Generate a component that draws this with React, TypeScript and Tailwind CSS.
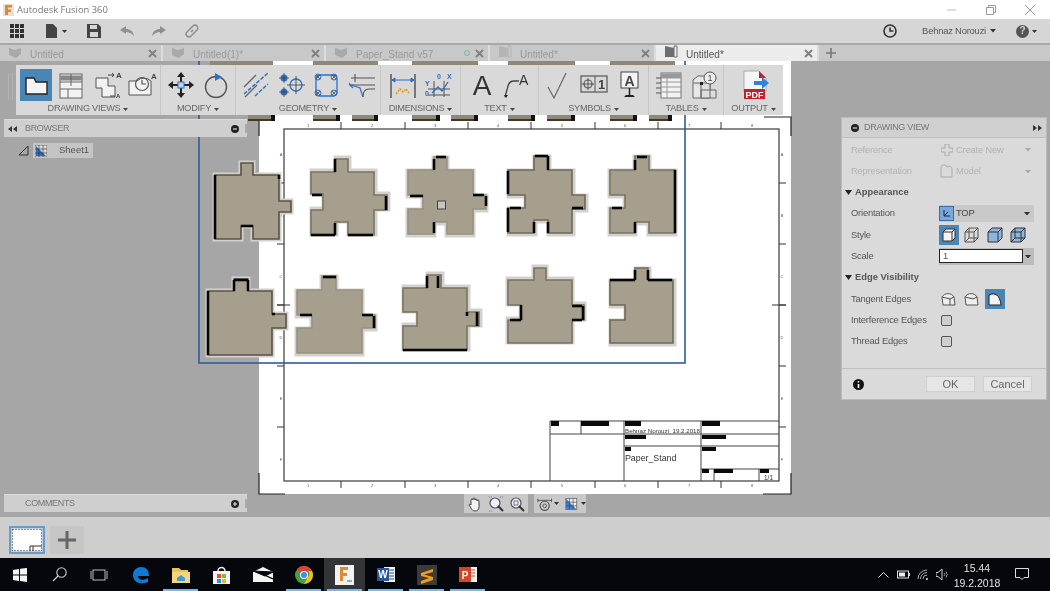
import React from "react";

const Caret = ({ c = "#444", w = 6 }: { c?: string; w?: number }) => (
  <svg width={w} height={w * 0.6} viewBox="0 0 10 6" className="inline-block shrink-0"><path d="M0 0h10L5 6z" fill={c} /></svg>
);

type P = {
  a: [number, number, number, number];
  t: [number, number, number];
  r?: [number, number, number];
  l?: [number, number, number];
  n?: [number, number, number];
  e: string;
  o: [number, number];
  k: string[];
};

const pieces: P[] = [
  { a: [215, 175, 279, 239], t: [241, 253, 163], r: [201, 212, 291], n: [241, 253, 226], e: "#5a5343", o: [0, 0], k: ["M215 175V239", "M241 226H253", "M279 175V179"] },
  { a: [311, 172, 374, 235], t: [335, 348, 159], r: [195, 210, 387], l: [194, 210, 323], n: [335, 348, 222], e: "#7a7362", o: [1, -1], k: ["M311 235H335", "M348 235H373", "M335 159V172", "M386 196V210", "M312 195H322", "M335 223V235"] },
  { a: [408, 170, 473, 234], t: [434, 447, 157], r: [195, 209, 486], l: [195, 209, 423], n: [434, 447, 222], e: "#979181", o: [0, 1], k: ["M436 157H446", "M434 159V170", "M410 196H423", "M473 195H484", "M486 196V206", "M434 222V233"] },
  { a: [508, 170, 572, 233], t: [534, 548, 156], r: [195, 209, 585], l: [195, 208, 525], n: [534, 548, 220], e: "#6f6857", o: [1, 1], k: ["M508 171V194", "M508 208V232", "M535 156H548", "M548 156V170", "M510 208H521", "M534 222V233", "M548 222V233", "M572 208H583"] },
  { a: [610, 170, 675, 233], t: [635, 649, 156], l: [195, 208, 625], n: [635, 649, 222], e: "#7a7362", o: [0, 1], k: ["M675 170V233", "M637 157H647", "M635 160V170", "M612 208H622", "M635 222V233"] },
  { a: [208, 291, 272, 355], t: [234, 248, 279], r: [314, 328, 286], e: "#5a5343", o: [0, 0], k: ["M208 291V355", "M234 280H248", "M234 280V291", "M248 280V291", "M272 314H275"] },
  { a: [297, 290, 362, 353], t: [322, 336, 276], r: [315, 328, 375], l: [315, 328, 312], e: "#979181", o: [0, 1], k: ["M323 277H336", "M300 315H312", "M362 315H373", "M374 316V328"] },
  { a: [403, 288, 467, 350], t: [427, 441, 275], r: [312, 326, 479], l: [312, 326, 417], e: "#7a7362", o: [1, -1], k: ["M403 350H467", "M438 276V288", "M467 312V316", "M477 312V326", "M427 276V288"] },
  { a: [508, 280, 572, 343], t: [534, 546, 268], r: [305, 320, 584], l: [305, 320, 521], e: "#7a7362", o: [0, -1], k: ["M510 320H521", "M521 305V320", "M572 306H582", "M572 320H582", "M583 306V320"] },
  { a: [610, 280, 673, 343], t: [635, 648, 268], l: [305, 320, 625], e: "#6f6857", o: [1, 1], k: ["M610 280H635", "M648 280H672", "M635 270V280", "M648 270V280"] },
];

const piecePath = (p: P) => {
  const [x1, y1, x2, y2] = p.a;
  let d = `M${x1} ${y1}H${p.t[0]}V${p.t[2]}H${p.t[1]}V${y1}H${x2}`;
  if (p.r) d += `V${p.r[0]}H${p.r[2]}V${p.r[1]}H${x2}`;
  d += `V${y2}`;
  if (p.n) d += `H${p.n[1]}V${p.n[2]}H${p.n[0]}V${y2}`;
  d += `H${x1}`;
  if (p.l) d += `V${p.l[1]}H${p.l[2]}V${p.l[0]}H${x1}`;
  return d + "Z";
};

const Sheet = () => {
  const topX = [341, 405, 468, 531, 595, 658, 721];
  const nums = [308, 372, 435, 498, 562, 625, 689, 752];
  const sideY = [183, 244, 305, 366, 427];
  const letters = ["A", "B", "C", "D", "E", "F"];
  const bars: [number, number, number, number][] = [
    [551, 421, 8, 5], [581, 421, 28, 5], [625, 421, 16, 5], [702, 421, 18, 5],
    [625, 435, 21, 4], [702, 435, 24, 4], [625, 447, 6, 4], [702, 447, 14, 4],
    [702, 469, 7, 4], [714, 469, 19, 4], [760, 469, 9, 4],
  ];
  const strip = [[210, 273], [313, 378], [412, 478], [508, 575], [610, 675]];
  const lowerBits = [[248, 275], [313, 340], [352, 378], [412, 440], [451, 478], [508, 535], [547, 575], [610, 637], [649, 672]];
  return (
    <svg className="absolute inset-0" width="1050" height="456" viewBox="0 61 1050 456">
      <rect x="259" y="61" width="532" height="433" fill="#fff" />
      <path d="M259 473V494H285M791 473V494H763M764 117H791V136M259 117V136" fill="none" stroke="#222" strokeWidth="1.2" />
      <rect x="284" y="129" width="495" height="352" fill="#fff" stroke="#3a3a3a" strokeWidth="1.2" />
      {topX.map((x) => (<path key={x} d={`M${x} 122V129M${x} 481V488`} stroke="#333" strokeWidth="1" />))}
      {nums.map((x, i) => (
        <g key={x} fontFamily="Liberation Sans" fontSize="4" fill="#555" textAnchor="middle">
          <text x={x} y={127}>{i + 1}</text>
          <text x={x} y={487}>{i + 1}</text>
        </g>
      ))}
      {sideY.map((y) => (<path key={y} d={`M277 ${y}H284M779 ${y}H786`} stroke="#333" strokeWidth="1" />))}
      <path d="M277 305H290M772 305H786" stroke="#333" strokeWidth="1" />
      {letters.map((l, i) => (
        <g key={l} fontFamily="Liberation Sans" fontSize="4" fill="#555" textAnchor="middle">
          <text x={281} y={156 + i * 61}>{l}</text>
          <text x={782} y={156 + i * 61}>{l}</text>
        </g>
      ))}
      {strip.map(([a, b]) => (<rect key={a} x={a} y={61} width={b - a} height={5} fill="#8f8877" />))}
      {lowerBits.map(([a, b]) => (
        <g key={a}>
          <rect x={a} y={115} width={b - a} height={6} fill="#8f8877" />
          <rect x={a} y={119} width={b - a} height={2} fill="#3c382e" />
          <rect x={b - 4} y={115} width={4} height={6} fill="#111" />
        </g>
      ))}
      {pieces.map((p, i) => {
        const d = piecePath(p);
        return (
          <g key={i}>
            <path d={d} transform={`translate(${p.o[0]} ${p.o[1]})`} fill="#cbc9c4" stroke="#d3d1cd" strokeWidth="5" />
            <path d={d} fill="#a69f8e" stroke={p.e} strokeWidth="1.6" />
            {p.k.map((s) => (<path key={s} d={s} fill="none" stroke="#060606" strokeWidth="2.6" />))}
          </g>
        );
      })}
      <rect x="437.5" y="201" width="8" height="8" fill="#c4c4c0" stroke="#444" strokeWidth="1" />
      <rect x="199" y="55" width="486" height="308" fill="none" stroke="#2f5a9e" strokeWidth="1.6" />
      <path d="M550 421H779M550 434H779M624 446H779M701 469H779M550 421V481M581 421V434M624 421V481M701 421V481M714 469V481M759 469V481" fill="none" stroke="#444" strokeWidth="1" />
      {bars.map(([x, y, w, h]) => (<rect key={x + "-" + y} x={x} y={y} width={w} height={h} fill="#0a0a0a" />))}
      <g fontFamily="Liberation Sans" fill="#333">
        <text x="625" y="433" fontSize="6.2" xmlSpace="preserve">Behnaz Norouzi  19.2.2018</text>
        <text x="625" y="461" fontSize="8.8">Paper_Stand</text>
        <text x="764" y="480" fontSize="6.5">1/1</text>
      </g>
    </svg>
  );
};

const Ic = ({ children, s = 32 }: { children: React.ReactNode; s?: number }) => (
  <svg width={s} height={s} viewBox="0 0 32 32" className="shrink-0">{children}</svg>
);

const l = { fill: "none", stroke: "#555", strokeWidth: 1.2 } as const;
const blue = { fill: "none", stroke: "#2e6fc4", strokeWidth: 1.3 } as const;

const tools: React.ReactNode[][] = [
  [
    <Ic key="a"><path d="M6 9h8l2 4h11v12H6z" fill="#f4f4f4" stroke="#222" strokeWidth="1.4" /></Ic>,
    <Ic key="b"><rect x="5" y="5" width="22" height="24" fill="#f2f2f2" stroke="#666" /><path d="M5 9h22" stroke="#888" strokeWidth="5" /><path d="M16 5v12M5 13h22M5 20h22M13 20v9" stroke="#666" /></Ic>,
    <Ic key="c"><path d="M6 9h12v8h7v11H12v-9H6z" fill="#f2f2f2" stroke="#555" /><path d="M18 6h6M24 6l-2-2M24 6l-2 2M25 27h-5" stroke="#444" /><text x="26" y="9" fontSize="8" fontFamily="Liberation Sans" fontWeight="700" fill="#444">A</text><text x="26" y="29" fontSize="6" fontFamily="Liberation Sans" fontWeight="700" fill="#444">A</text></Ic>,
    <Ic key="d"><path d="M4 12h8a10 10 0 0 1 14 0v14H4z" fill="#f2f2f2" stroke="#555" /><circle cx="17" cy="15" r="6.5" {...l} /><path d="M17 11v4h4" {...l} /><text x="26" y="10" fontSize="8" fontFamily="Liberation Sans" fontWeight="700" fill="#444">A</text></Ic>,
  ],
  [
    <Ic key="a"><path d="M16 3l4 5h-8zM16 29l-4-5h8zM3 16l5-4v8zM29 16l-5 4v-8z" fill="#222" /><path d="M8 16h16M16 8v16" stroke="#222" strokeWidth="2" /><rect x="13" y="13" width="6" height="6" fill="#bcd4ee" stroke="#2e6fc4" /></Ic>,
    <Ic key="b"><circle cx="16" cy="18" r="10.5" fill="none" stroke="#555" strokeWidth="1.4" /><path d="M15 4l7 4-7 4z" fill="#2e6fc4" /></Ic>,
  ],
  [
    <Ic key="a"><path d="M4 18L16 6M5 28L17 16" stroke="#666" strokeWidth="1.4" /><path d="M4 25L28 4M15 27L28 15" stroke="#2e6fc4" strokeWidth="1.4" strokeDasharray="4 1.5" /></Ic>,
    <Ic key="b"><circle cx="9" cy="9" r="3.5" fill="#2e6fc4" /><circle cx="9" cy="23" r="3.5" fill="#2e6fc4" /><path d="M9 4v10M4 9h10M9 18v10M4 23h10" stroke="#444" strokeWidth=".8" /><circle cx="21" cy="16" r="6" {...blue} /><path d="M21 7v18M12 16h18" stroke="#555" strokeWidth="1" /></Ic>,
    <Ic key="c"><rect x="6" y="6" width="21" height="21" rx="4" {...blue} />{[[8, 8], [24, 8], [8, 24], [24, 24]].map(([x, y]) => (<g key={x + "" + y}><circle cx={x} cy={y} r="3" fill="none" stroke="#2e6fc4" /><path d={`M${x - 2} ${y - 2}l4 4M${x + 2} ${y - 2}l-4 4`} stroke="#444" strokeWidth=".8" /></g>))}</Ic>,
    <Ic key="d"><path d="M6 9h24M7 16h23M10 5v8" stroke="#555" strokeWidth="1.1" /><path d="M4 15l11 4 3 9M4 15l5 2M4 15l4 4" stroke="#2e6fc4" strokeWidth="1.2" fill="none" /><path d="M18 28c0-6 2-8 6-8h6" {...l} /></Ic>,
  ],
  [
    <Ic key="a"><path d="M4 5v24M28 5v24" stroke="#444" strokeWidth="1.3" /><path d="M5 11h22M5 11l3-2v4zM27 11l-3-2v4z" stroke="#2e6fc4" fill="#2e6fc4" /><path d="M9 25l4-5 3 3 3-3 3 4" fill="none" stroke="#d3a028" strokeWidth="1.6" strokeDasharray="2 1" /></Ic>,
    <Ic key="b"><path d="M6 20h22M6 26h22M12 12v16M22 12v16" stroke="#555" /><path d="M10 24l6-6 4 4 6-9" {...blue} /><g fontFamily="Liberation Sans" fontWeight="700" fontSize="7" fill="#2e6fc4"><text x="15" y="10">0</text><text x="25" y="10">X</text><text x="3" y="17">Y</text><text x="3" y="27">0</text></g></Ic>,
  ],
  [
    <Ic key="a" s={32}><text x="16" y="26" textAnchor="middle" fontFamily="Liberation Sans" fontSize="28" fill="#333">A</text></Ic>,
    <Ic key="b"><path d="M4 28l3-11c1-4 3-5 6-5h5" fill="none" stroke="#444" strokeWidth="1.3" /><path d="M3 26l2 3 2-3z" fill="#222" /><text x="18" y="16" fontFamily="Liberation Sans" fontSize="14" fill="#333">A</text></Ic>,
  ],
  [
    <Ic key="a"><path d="M5 18l6 11L23 4" fill="none" stroke="#666" strokeWidth="1.2" /></Ic>,
    <Ic key="b"><rect x="3" y="7" width="26" height="16" fill="none" stroke="#555" strokeWidth="1.2" /><path d="M17 7v16" stroke="#555" /><circle cx="10" cy="15" r="4" {...l} /><path d="M10 9v12M4 15h12" stroke="#555" /><text x="20" y="20" fontFamily="Liberation Sans" fontWeight="700" fontSize="13" fill="#444">1</text></Ic>,
    <Ic key="c"><rect x="8" y="3" width="17" height="16" fill="#f4f4f4" stroke="#444" /><text x="16.5" y="17" textAnchor="middle" fontFamily="Liberation Sans" fontWeight="700" fontSize="14" fill="#444">A</text><path d="M16.5 19v7" stroke="#222" strokeWidth="1.5" /><path d="M13 26h7l2 2H11z" fill="#222" /></Ic>,
  ],
  [
    <Ic key="a"><rect x="8" y="4" width="20" height="25" fill="#f2f2f2" stroke="#777" /><path d="M8 7h20" stroke="#999" strokeWidth="5" /><path d="M8 13h20M8 18h20M8 23h20M14 9v20" stroke="#999" /><path d="M3 9h5M3 14h5M3 19h5M3 24h5" stroke="#555" /></Ic>,
    <Ic key="b"><path d="M5 11l5-4h12v22H5z" fill="#e8e8e8" stroke="#666" /><path d="M5 14h17v15M13 14v15M13 21h15v8H13z" fill="#dedede" stroke="#666" /><rect x="12" y="13" width="3" height="3" fill="#222" /><circle cx="22" cy="9" r="6" fill="#eee" stroke="#555" /><text x="22" y="12" textAnchor="middle" fontFamily="Liberation Sans" fontSize="9" fill="#444">1</text></Ic>,
  ],
  [
    <Ic key="a"><path d="M6 2h15l7 7v14H6z" fill="#f5f5f5" stroke="#aaa" /><path d="M21 2l7 7h-7z" fill="#c4202a" /><rect x="6" y="20" width="21" height="10" fill="#c4202a" /><text x="16.5" y="28.5" textAnchor="middle" fontFamily="Liberation Sans" fontWeight="700" fontSize="9" fill="#fff">PDF</text><path d="M16 12h8V8l7 6-7 6v-4h-8z" fill="#2f84d8" /></Ic>,
  ],
];

const groups: [string, number][] = [
  ["DRAWING VIEWS", 145], ["MODIFY", 75], ["GEOMETRY", 145], ["DIMENSIONS", 80],
  ["TEXT", 78], ["SYMBOLS", 110], ["TABLES", 75], ["OUTPUT", 59],
];

const Toolbar = () => (
  <div className="absolute left-[16px] top-[4px] flex h-[50px] w-[767px] bg-[#d9d9d9]">
    {groups.map(([name, w], i) => (
      <div key={name} style={{ width: w }} className="flex shrink-0 flex-col border-r border-[#c6c6c6] pt-[4px] last:border-r-0">
        <div className="flex h-[32px] justify-center">
          {tools[i].map((t, j) => (
            <div key={j} className="flex h-[32px] w-[35px] items-center justify-center">
              <div className={`flex h-[32px] w-[32px] items-center justify-center ${i === 0 && j === 0 ? "bg-[#4a86b5]" : ""}`}>{t}</div>
            </div>
          ))}
        </div>
        <div className="mt-[2px] flex h-[12px] items-center justify-center gap-[3px] text-[9.2px] leading-none tracking-[-0.25px] text-[#666]">
          {name}
          <Caret c="#444" w={5} />
        </div>
      </div>
    ))}
  </div>
);

const Tri2 = ({ flip }: { flip?: boolean }) => (
  <svg width="9" height="6" viewBox="0 0 9 6" className={flip ? "rotate-180" : ""}><path d="M4 0v6L0 3zM9 0v6L5 3z" fill="#333" /></svg>
);

const Dot = ({ plus }: { plus?: boolean }) => (
  <svg width="8" height="8" viewBox="0 0 8 8" className="shrink-0"><circle cx="4" cy="4" r="4" fill="#222" /><path d={plus ? "M2 4h4M4 2v4" : "M2 4h4"} stroke="#ddd" strokeWidth="1.2" /></svg>
);

const LeftPanel = ({ title, plus, first }: { title: string; plus?: boolean; first?: boolean }) => (
  <div className="flex h-[18px] w-[243px] items-center border-t border-[#dcdcdc] bg-[#cfcfcf] pl-[4px] text-[9px] tracking-[-0.35px] text-[#777]">
    <span className="w-[17px]">{first && <Tri2 />}</span>
    <span className="flex-1">{title}</span>
    <Dot plus={plus} />
    <span className="ml-[6px] h-[9px] w-[2px] border-x border-[#aaa]" />
  </div>
);

const Box = ({ children }: { children: React.ReactNode }) => (
  <svg width="20" height="20" viewBox="0 0 20 20" className="shrink-0">{children}</svg>
);
const cube = { fill: "#f4f4f4", stroke: "#333", strokeWidth: 1 } as const;

const Row = ({ label, dim, children }: { label: string; dim?: boolean; children?: React.ReactNode }) => (
  <div className={`flex h-[21.3px] items-center pl-[9px] text-[9.4px] tracking-[-0.2px] ${dim ? "text-[#b2b2b2]" : "text-[#555]"}`}>
    <span className="w-[89px] shrink-0">{label}</span>
    {children}
  </div>
);

const Section = ({ label }: { label: string }) => (
  <div className="flex h-[21.3px] items-center gap-[3px] pl-[3px] text-[9.4px] font-bold text-[#555]">
    <svg width="7" height="5" viewBox="0 0 7 5"><path d="M0 0h7L3.5 5z" fill="#222" /></svg>
    {label}
  </div>
);

const DrawingPanel = () => (
  <div className="absolute left-[842px] top-[57px] flex h-[281px] w-[204px] flex-col bg-[#dadada] shadow-[0_0_0_1px_#bcbcbc]">
    <div className="flex h-[20px] shrink-0 items-center border-b border-[#bdbdbd] bg-[#d0d0d0] pl-[9px] pr-[4px] text-[9px] tracking-[-0.3px] text-[#777]">
      <Dot />
      <span className="ml-[5px] flex-1">DRAWING VIEW</span>
      <Tri2 flip />
    </div>
    <div className="flex-1 pt-[1px]">
      <Row label="Reference" dim>
        <svg width="12" height="12" viewBox="0 0 12 12" className="ml-[1px] mr-[3px]"><path d="M4 0h4v4h4v4H8v4H4V8H0V4h4z" fill="none" stroke="#aaa" /></svg>
        <span className="flex-1">Create New</span>
        <span className="mr-[15px]"><Caret c="#aaa" /></span>
      </Row>
      <Row label="Representation" dim>
        <svg width="14" height="14" viewBox="0 0 14 14" className="mr-[2px]"><path d="M1 5a3 3 0 0 1 6-2 3 3 0 0 1 5 2v8H1z" fill="none" stroke="#aaa" /></svg>
        <span className="flex-1">Model</span>
        <span className="mr-[15px]"><Caret c="#aaa" /></span>
      </Row>
      <Section label="Appearance" />
      <Row label="Orientation">
        <div className="-ml-[1px] mr-[12px] flex h-[17px] flex-1 items-center bg-[#c9c9c9] pr-[4px] text-[#444]">
          <svg width="15" height="15" viewBox="0 0 15 15" className="mr-[2px]"><rect x=".5" y=".5" width="14" height="14" fill="#79a9d8" stroke="#3c6ea5" /><path d="M5 4v6h6M5 10l4-4" stroke="#224" fill="none" /></svg>
          <span className="flex-1">TOP</span>
          <Caret c="#333" />
        </div>
      </Row>
      <Row label="Style">
        <div className="-ml-[1px] flex items-center gap-[3px]">
          <div className="flex h-[20px] w-[20px] items-center justify-center bg-[#4a86b5]"><Box><path d="M4 7l3-3h9v9l-3 3H4zM4 7h9v9M13 7l3-3" {...cube} /></Box></div>
          <Box><path d="M3 7l4-4h9v10l-4 4H3zM3 7h9v10M12 7l4-4M7 3v10h9M7 13l-4 4" fill="none" stroke="#555" /></Box>
          <Box><path d="M3 7l4-4h10v10l-4 4H3z" fill="#8db5e0" stroke="#333" /><path d="M3 7h10v10M13 7l4-4" fill="none" stroke="#333" /></Box>
          <Box><path d="M3 7l4-4h10v10l-4 4H3z" fill="#8db5e0" stroke="#333" /><path d="M3 7h10v10M13 7l4-4M7 3v10h10M7 13l-4 4" fill="none" stroke="#333" /></Box>
        </div>
      </Row>
      <Row label="Scale">
        <div className="-ml-[1px] flex h-[17px] w-[95px] items-center bg-[#bcbcbc]">
          <div className="flex h-[14px] w-[84px] items-center border border-[#222] bg-white pl-[3px] leading-none text-[#555]">1</div>
          <span className="ml-[2px]"><Caret c="#333" /></span>
        </div>
      </Row>
      <Section label="Edge Visibility" />
      <Row label="Tangent Edges">
        <div className="-ml-[1px] flex items-center gap-[3px]">
          <Box><path d="M3 8a7 7 0 0 1 12 0l1 8H4zM3 8l8 2 4-2M11 10v6" fill="#eee" stroke="#555" /></Box>
          <Box><path d="M3 8a7 7 0 0 1 12 0l1 8H4zM3 8l8 2 4-2" fill="#eee" stroke="#555" /></Box>
          <div className="flex h-[20px] w-[20px] items-center justify-center bg-[#4a86b5]"><Box><path d="M4 6c6-3 11 0 12 10H4z" fill="#f4f4f4" stroke="#222" /></Box></div>
        </div>
      </Row>
      <Row label="Interference Edges"><span className="ml-[1px] h-[11px] w-[11px] rounded-[2px] border border-[#555] bg-[#cfcfcf]" /></Row>
      <Row label="Thread Edges"><span className="ml-[1px] h-[11px] w-[11px] rounded-[2px] border border-[#555] bg-[#cfcfcf]" /></Row>
    </div>
    <div className="flex h-[31px] shrink-0 items-center border-t border-[#c0c0c0] pl-[11px] pr-[14px] text-[11px] text-[#666]">
      <svg width="11" height="11" viewBox="0 0 11 11"><circle cx="5.5" cy="5.5" r="5.5" fill="#111" /><path d="M5.5 2v1.5M5.5 5v4" stroke="#fff" strokeWidth="1.6" /></svg>
      <div className="ml-[62px] flex h-[16px] w-[49px] items-center justify-center border border-[#cfcfcf] bg-[#e6e6e6]">OK</div>
      <div className="ml-[8px] flex h-[16px] w-[49px] items-center justify-center border border-[#cfcfcf] bg-[#e6e6e6]">Cancel</div>
    </div>
  </div>
);

const NavBar = () => (
  <div className="absolute left-[464px] top-[433px] flex h-[19px] gap-[6px]">
    <div className="flex w-[64px] items-center justify-around bg-[#c9c9c9] px-[1px]">
      <svg width="16" height="16" viewBox="0 0 16 16"><path d="M4 9V4a1 1 0 0 1 2 0V3a1 1 0 0 1 2 0v1a1 1 0 0 1 2 0v1a1 1 0 0 1 2 0v6c0 3-2 4-4 4s-3-1-4-3L2 9c0-1 1-1 2 0z" fill="#f4f4f4" stroke="#444" /></svg>
      <svg width="16" height="16" viewBox="0 0 16 16"><circle cx="7" cy="7" r="5" fill="#eef" stroke="#555" strokeWidth="1.2" /><path d="M10 10l5 5" stroke="#333" strokeWidth="2" /><path d="M1 1h3M12 1h3M1 15h3" stroke="#777" strokeDasharray="1 1" /></svg>
      <svg width="16" height="16" viewBox="0 0 16 16"><circle cx="7" cy="7" r="5" fill="#eef" stroke="#555" strokeWidth="1.2" /><rect x="5" y="5" width="4" height="4" fill="none" stroke="#777" /><path d="M10 10l5 5" stroke="#333" strokeWidth="2" /></svg>
    </div>
    <div className="flex w-[52px] items-center gap-[2px] bg-[#c9c9c9] pl-[3px]">
      <svg width="17" height="16" viewBox="0 0 17 16"><path d="M1 2v4M16 2v4M1 4h15" stroke="#555" /><circle cx="8.5" cy="10" r="5" fill="none" stroke="#555" strokeWidth="1.3" /><circle cx="8.5" cy="10" r="2" fill="none" stroke="#555" /></svg>
      <Caret c="#333" w={5} />
      <svg width="16" height="16" viewBox="0 0 16 16" className="ml-[3px]"><rect x="2" y="2" width="12" height="12" fill="#eee" stroke="#777" /><path d="M2 2l12 12H2z" fill="#3f7fd0" /><path d="M2 6h12M2 10h12M6 2v12M10 2v12" stroke="#444" strokeWidth=".7" /></svg>
      <Caret c="#333" w={5} />
    </div>
  </div>
);

const Cube = () => (
  <svg width="14" height="14" viewBox="0 0 14 14" className="mb-[2px] shrink-0"><path d="M1 3l6-2 6 2v6l-5 4-7-3z" fill="#a9a9a9" /><path d="M1 3l6 2 6-2-6-2z" fill="#c9c9c9" /></svg>
);
const Doc = ({ dark }: { dark?: boolean }) => (
  <svg width="14" height="14" viewBox="0 0 14 14" className="mb-[2px] shrink-0"><path d="M1 1l9 2v9H1z" fill={dark ? "#6d6d6d" : "#b4b4b4"} /><path d="M10 1h3v11h-3z" fill="none" stroke={dark ? "#6d6d6d" : "#b4b4b4"} /></svg>
);

const tabs = [
  { t: "Untitled", w: 163, i: <Cube /> },
  { t: "Untitled(1)*", w: 163, i: <Cube /> },
  { t: "Paper_Stand v57", w: 164, i: <Cube />, s: true },
  { t: "Untitled*", w: 166, i: <Doc /> },
];

const X = ({ c }: { c: string }) => (
  <svg width="9" height="9" viewBox="0 0 9 9" className="shrink-0"><path d="M1 1l7 7M8 1L1 8" stroke={c} strokeWidth="2" /></svg>
);

const TabBar = () => (
  <div className="flex h-[18px] shrink-0 items-stretch border-t-2 border-[#a8a8a8] bg-[#c8c8c8] text-[10px]">
    {tabs.map((tab) => (
      <div key={tab.t} style={{ width: tab.w }} className="flex shrink-0 items-center border-r-2 border-[#dcdcdc] pl-[8px] pr-[4px] text-[#9a9a9a]">
        {tab.i}
        <span className="ml-[8px] mt-[3px] flex-1">{tab.t}</span>
        {tab.s && <span className="mr-[5px] h-[6px] w-[6px] rounded-full border border-[#6fc0a0]" />}
        <X c="#808080" />
      </div>
    ))}
    <div className="flex w-[163px] shrink-0 items-center border-r-2 border-[#dcdcdc] bg-[#ececec] pl-[8px] pr-[4px] text-[#555]">
      <Doc dark />
      <span className="ml-[8px] mt-[3px] flex-1">Untitled*</span>
      <X c="#808080" />
    </div>
    <svg width="24" height="16" viewBox="0 0 24 16"><path d="M7 8h10M12 3v10" stroke="#777" strokeWidth="1.6" /></svg>
  </div>
);

const TopBar = () => (
  <div className="flex h-[24px] shrink-0 items-center bg-[#d6d6d6] pl-[10px] pr-[13px]">
    <svg width="14" height="14" viewBox="0 0 14 14">{[0, 5, 10].flatMap((x) => [0, 5, 10].map((y) => (<rect key={x + "" + y} x={x} y={y} width="4" height="4" fill="#333" />)))}</svg>
    <svg width="12" height="14" viewBox="0 0 12 14" className="ml-[22px]"><path d="M0 0h7l4 4v10H0z" fill="#444" /></svg>
    <span className="ml-[4px]"><Caret c="#333" w={5} /></span>
    <svg width="14" height="14" viewBox="0 0 14 14" className="ml-[20px]"><path d="M0 0h11l3 3v11H0z" fill="#444" /><rect x="3" y="1" width="7" height="4" fill="#d6d6d6" /><rect x="3" y="8" width="8" height="5" fill="#d6d6d6" /></svg>
    <svg width="14" height="10" viewBox="0 0 14 10" className="ml-[19px]"><path d="M6 0L0 4l6 4V6c3 0 5 1 8 4-1-5-4-7-8-7z" fill="#8f8f8f" /></svg>
    <svg width="14" height="10" viewBox="0 0 14 10" className="ml-[18px]"><path d="M8 0l6 4-6 4V6c-3 0-5 1-8 4 1-5 4-7 8-7z" fill="#8f8f8f" /></svg>
    <svg width="14" height="14" viewBox="0 0 14 14" className="ml-[19px]"><path d="M6 8l2-2M5 5l3-3a2.5 2.5 0 0 1 4 4L9 9M9 9L6 12a2.5 2.5 0 0 1-4-4l3-3" fill="none" stroke="#8a8a8a" strokeWidth="1.4" /></svg>
    <div className="flex-1" />
    <svg width="14" height="14" viewBox="0 0 14 14"><circle cx="7" cy="7" r="6" fill="none" stroke="#333" strokeWidth="1.6" /><path d="M7 3.5V7h3.5" fill="none" stroke="#333" strokeWidth="1.6" /></svg>
    <span className="ml-[25px] flex items-center gap-[4px] text-[9.4px] tracking-[-0.2px] text-[#555]">Behnaz Norouzi<Caret c="#333" w={6} /></span>
    <span className="ml-[20px] flex h-[13px] w-[13px] items-center justify-center rounded-full bg-[#555] text-[10px] font-bold leading-none text-[#d6d6d6]">?</span>
    <span className="ml-[3px]"><Caret c="#333" w={5} /></span>
  </div>
);

const Chrome = () => (
  <svg width="18" height="18" viewBox="0 0 18 18"><circle cx="9" cy="9" r="9" fill="#3da14a" /><path d="M9 0a9 9 0 0 1 8 5H9a4 4 0 0 0-4 2L2 3a9 9 0 0 1 7-3z" fill="#db4437" /><path d="M17 5a9 9 0 0 1-8 13l4-7a4 4 0 0 0 0-6z" fill="#f4c20d" /><circle cx="9" cy="9" r="4" fill="#fff" /><circle cx="9" cy="9" r="3" fill="#4a86e8" /></svg>
);

const app = (cls: string, node: React.ReactNode, running = false, active = false) => ({ cls, node, running, active });

const taskItems = [
  app("pl-[3px]", <svg width="18" height="18" viewBox="0 0 18 18"><path d="M1 9C1 4 5 1 9 1c5 0 8 3 8 9H6c0 4 5 5 10 2v4c-7 3-15 1-15-7z" fill="#0f78d4" /></svg>),
  app("", <svg width="18" height="16" viewBox="0 0 18 16"><path d="M0 1h7l2 2h7v4H0z" fill="#e8c25a" /><path d="M0 5h18v11H0z" fill="#f3d67e" /><path d="M5 14v-3l4-3 4 3v3z" fill="#4a9ac8" /></svg>, true),
  app("", <svg width="17" height="18" viewBox="0 0 17 18"><path d="M0 5h17v13H0z" fill="#f4f4f4" /><path d="M5 5a3.500 3.500 0 0 1 7 0" fill="none" stroke="#f4f4f4" strokeWidth="1.4" /><rect x="4" y="8" width="4" height="4" fill="#e8502f" /><rect x="9" y="8" width="4" height="4" fill="#7cbb3f" /><rect x="4" y="13" width="4" height="4" fill="#1a9ae0" /><rect x="9" y="13" width="4" height="4" fill="#f5b60d" /></svg>),
  app("", <svg width="20" height="15" viewBox="0 0 20 15"><path d="M0 5l10-5 10 5v10H0z" fill="#f4f4f4" /><path d="M0 4l20 1-8 4z" fill="#05070c" stroke="#05070c" /><path d="M7 6l13 6" stroke="#05070c" strokeWidth="1.300" /></svg>),
  app("", <Chrome />, true),
  app("bg-[#333436]", <svg width="19" height="20" viewBox="0 0 19 20"><rect width="19" height="20" fill="#f2f2f2" /><path d="M5 2h8v3H8v3h4v3H8v5H5z" fill="#e28a2f" /><path d="M12 16h5" stroke="#5aa" strokeWidth="1.500" /></svg>, true, true),
  app("", <svg width="18" height="17" viewBox="0 0 18 17"><rect x="7" y="1" width="11" height="15" fill="#f2f2f2" /><path d="M8 4h9M8 7h9M8 10h9M8 13h9" stroke="#2b579a" strokeWidth="1.200" /><rect y="2" width="12" height="13" fill="#2b579a" /><text x="6" y="12" textAnchor="middle" fontFamily="Liberation Sans" fontWeight="700" fontSize="10" fill="#fff">W</text></svg>, true),
  app("", <svg width="20" height="20" viewBox="0 0 20 20"><rect width="20" height="20" fill="#3b3b3b" /><path d="M4 8l12-4v3L7 9.500l9 2.500v3L4 19v-3l8-3-8-2z" fill="#f29d18" /></svg>, true),
  app("", <svg width="18" height="17" viewBox="0 0 18 17"><rect x="7" y="1" width="11" height="15" fill="#f2f2f2" /><path d="M11 4h5M11 7h5M11 10h5" stroke="#d24726" strokeWidth="1.200" /><rect y="1" width="12" height="15" fill="#d24726" /><text x="6" y="12.500" textAnchor="middle" fontFamily="Liberation Sans" fontWeight="700" fontSize="10" fill="#fff">P</text></svg>, true),
];

const Taskbar = () => (
  <div className="flex h-[33px] shrink-0 items-stretch bg-[#05070c] text-white">
    <div className="flex w-[39px] items-center justify-center">
      <svg width="14" height="14" viewBox="0 0 14 14"><path d="M0 2l6-1v5.500H0zM7 .800L14 0v6.500H7zM0 7.500h6V13l-6-1zM7 7.500h7V14l-7-1z" fill="#f4f4f4" /></svg>
    </div>
    <div className="flex w-[40px] items-center justify-center">
      <svg width="15" height="15" viewBox="0 0 15 15"><circle cx="9.500" cy="5.500" r="4.700" fill="none" stroke="#ccc" strokeWidth="1.100" /><path d="M6 9l-5 5" stroke="#ccc" strokeWidth="1.300" /></svg>
    </div>
    <div className="flex w-[40px] items-center justify-center">
      <svg width="18" height="12" viewBox="0 0 18 12"><rect x="3" y="1" width="12" height="10" fill="none" stroke="#bbb" /><path d="M1 2v8M17 2v8" stroke="#bbb" /></svg>
    </div>
    <div className="flex">
      {taskItems.map((t, i) => (
        <div key={i} className={`relative flex w-[41px] items-center justify-center ${t.cls}`}>
          {t.node}
          {t.running && <span className="absolute bottom-0 left-[3px] right-[3px] h-[2px] bg-[#76b9ed]" />}
        </div>
      ))}
    </div>
    <div className="flex-1" />
    <div className="flex items-center gap-[7px] pr-[9px]">
      <svg width="11" height="7" viewBox="0 0 11 7" className="mr-[1.500px]"><path d="M.5 6.500l5-5 5 5" fill="none" stroke="#ddd" /></svg>
      <svg width="13" height="9" viewBox="0 0 13 9"><rect x=".5" y="1" width="11" height="7" fill="none" stroke="#ddd" /><rect x="2" y="2.500" width="6" height="4" fill="#eee" /><path d="M12.500 3v3" stroke="#ddd" /></svg>
      <svg width="12" height="11" viewBox="0 0 12 11"><path d="M1 10a9 9 0 0 1 9-9M3.500 10A6.500 6.500 0 0 1 10 3.500M6 10a4 4 0 0 1 4-4" fill="none" stroke="#aaa" /><circle cx="10" cy="10" r="1" fill="#ddd" /></svg>
      <svg width="13" height="11" viewBox="0 0 13 11"><path d="M0 3.500h2L6 0v11L2 7.500H0z" fill="none" stroke="#ccc" /><path d="M8 4a2 2 0 0 1 0 3M10 2.500a5 5 0 0 1 0 6" fill="none" stroke="#999" /></svg>
      <div className="-ml-[1px] flex w-[44px] flex-col items-center pt-[2px] text-[10.5px] leading-[15px] text-[#e2e2e2]">
        <span>15.44</span>
        <span>19.2.2018</span>
      </div>
      <svg width="14" height="13" viewBox="0 0 14 13" className="ml-[9px] mr-[12px]"><path d="M.5.500h13v9H9l-2 2-2-2H.5z" fill="none" stroke="#ddd" /></svg>
    </div>
  </div>
);

export default function App() {
  return (
    <div className="flex h-[591px] w-[1050px] flex-col overflow-hidden bg-[#a6a6a6] font-['Liberation_Sans',sans-serif] blur-[0.5px]">
      <div className="flex h-[19px] shrink-0 items-center bg-white pl-[3px] text-[#777]">
        <svg width="11" height="12" viewBox="0 0 11 12"><rect width="11" height="12" fill="#e9e2d4" /><path d="M2 1h7v2.500H5v2h3V8H5v3H2z" fill="#df8a30" /></svg>
        <span className="ml-[3px] mt-[1px] flex-1 font-['Open_Sans',sans-serif] text-[9.4px]">Autodesk Fusion 360</span>
        <svg width="12" height="12" viewBox="0 0 12 12" className="mr-[27px]"><path d="M1 6h9" stroke="#bbb" /></svg>
        <svg width="12" height="12" viewBox="0 0 12 12" className="mr-[27px]"><path d="M1.500 3.500h7v7h-7zM3.500 3.500v-2h7v7h-2" fill="none" stroke="#999" /></svg>
        <svg width="12" height="12" viewBox="0 0 12 12" className="mr-[14px]"><path d="M1 1l10 10M11 1L1 11" stroke="#999" /></svg>
      </div>
      <TopBar />
      <TabBar />
      <div className="relative h-[456px] shrink-0 overflow-hidden bg-[#a6a6a6]">
        <Sheet />
        <div className="absolute left-[8px] top-[12px] h-[27px] w-[5px] border-x border-[#b4b4b4]" />
        <Toolbar />
        <div className="absolute left-[4px] top-[58px] flex w-[243px] flex-col">
          <LeftPanel title="BROWSER" first />
          <div className="flex items-center pl-[14px] pt-[6px] text-[9.500px] text-[#555]">
            <svg width="11" height="11" viewBox="0 0 11 11"><path d="M10 1v9H1z" fill="none" stroke="#333" /></svg>
            <div className="ml-[4px] flex h-[15px] w-[60px] items-center bg-[#c4c4c4] pl-[2px]">
              <svg width="12" height="12" viewBox="0 0 12 12"><rect width="12" height="12" fill="#ddd" stroke="#777" /><path d="M1 1l10 10H1z" fill="#2f6fc4" /><path d="M0 4h12M0 8h12M4 0v12M8 0v12" stroke="#333" strokeWidth=".6" /></svg>
              <span className="ml-[12px]">Sheet1</span>
            </div>
          </div>
        </div>
        <div className="absolute left-[4px] top-[433px]"><LeftPanel title="COMMENTS" plus /></div>
        <NavBar />
        <DrawingPanel />
      </div>
      <div className="flex h-[41px] shrink-0 items-start gap-[5px] bg-[#cecece] pl-[9px] pt-[9px]">
        <div className="flex h-[28px] w-[36px] items-center justify-center border-2 border-[#6c9ac4] bg-[#bcd0e2]">
          <svg width="30" height="22" viewBox="0 0 30 22"><rect width="30" height="22" fill="#fff" stroke="#222" strokeDasharray="2 1" /><path d="M18 22v-5h12M21 17v5" fill="none" stroke="#333" /></svg>
        </div>
        <div className="flex h-[28px] w-[34px] items-center justify-center bg-[#c6c6c6]">
          <svg width="18" height="18" viewBox="0 0 18 18"><path d="M0 9h18M9 0v18" stroke="#666" strokeWidth="3" /></svg>
        </div>
      </div>
      <Taskbar />
    </div>
  );
}
